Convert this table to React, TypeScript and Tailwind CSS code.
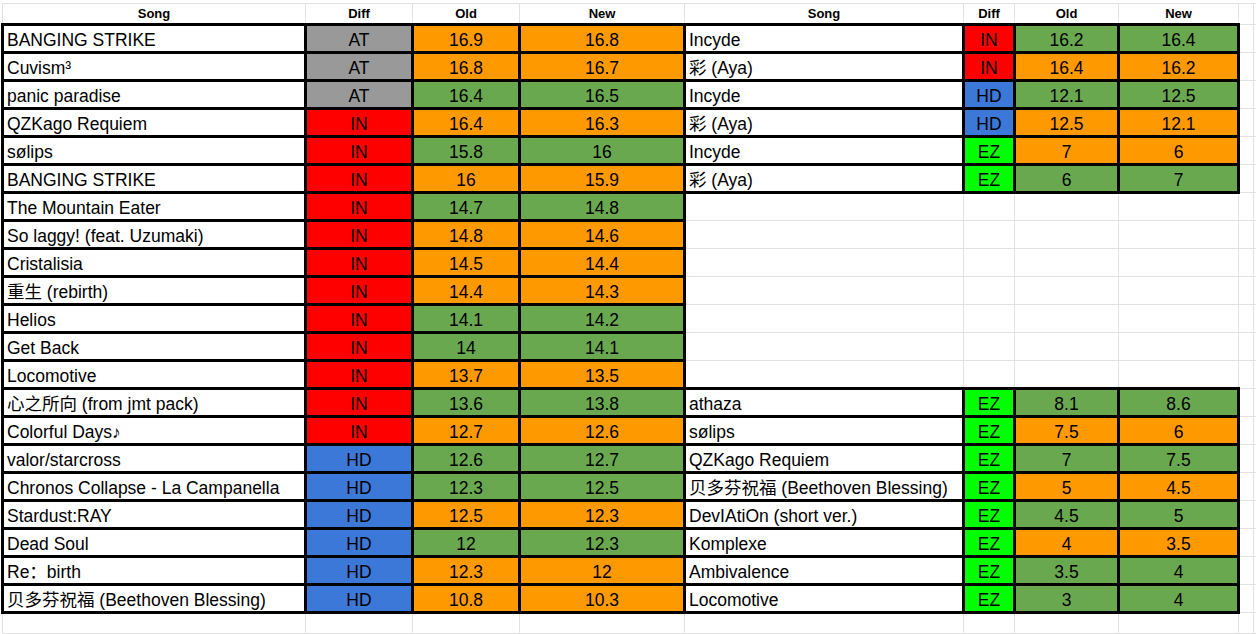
import React from 'react';

type Tier = 'AT' | 'IN' | 'HD' | 'EZ';
type Row = [string, Tier, string, string, 'o' | 'g'];

const tierBg: Record<Tier, string> = {
  AT: 'bg-[#999999]',
  IN: 'bg-[#ff0000]',
  HD: 'bg-[#3c78d8]',
  EZ: 'bg-[#00ff00]',
};

const left: Row[] = [
  ['BANGING STRIKE', 'AT', '16.9', '16.8', 'o'],
  ['Cuvism³', 'AT', '16.8', '16.7', 'o'],
  ['panic paradise', 'AT', '16.4', '16.5', 'g'],
  ['QZKago Requiem', 'IN', '16.4', '16.3', 'o'],
  ['sølips', 'IN', '15.8', '16', 'g'],
  ['BANGING STRIKE', 'IN', '16', '15.9', 'o'],
  ['The Mountain Eater', 'IN', '14.7', '14.8', 'g'],
  ['So laggy! (feat. Uzumaki)', 'IN', '14.8', '14.6', 'o'],
  ['Cristalisia', 'IN', '14.5', '14.4', 'o'],
  ['重生 (rebirth)', 'IN', '14.4', '14.3', 'o'],
  ['Helios', 'IN', '14.1', '14.2', 'g'],
  ['Get Back', 'IN', '14', '14.1', 'g'],
  ['Locomotive', 'IN', '13.7', '13.5', 'o'],
  ['心之所向 (from jmt pack)', 'IN', '13.6', '13.8', 'g'],
  ['Colorful Days♪', 'IN', '12.7', '12.6', 'o'],
  ['valor/starcross', 'HD', '12.6', '12.7', 'g'],
  ['Chronos Collapse - La Campanella', 'HD', '12.3', '12.5', 'g'],
  ['Stardust:RAY', 'HD', '12.5', '12.3', 'o'],
  ['Dead Soul', 'HD', '12', '12.3', 'g'],
  ['Re：birth', 'HD', '12.3', '12', 'o'],
  ['贝多芬祝福 (Beethoven Blessing)', 'HD', '10.8', '10.3', 'o'],
];

// null = empty row on the right side
const right: (Row | null)[] = [
  ['Incyde', 'IN', '16.2', '16.4', 'g'],
  ['彩 (Aya)', 'IN', '16.4', '16.2', 'o'],
  ['Incyde', 'HD', '12.1', '12.5', 'g'],
  ['彩 (Aya)', 'HD', '12.5', '12.1', 'o'],
  ['Incyde', 'EZ', '7', '6', 'o'],
  ['彩 (Aya)', 'EZ', '6', '7', 'g'],
  null, null, null, null, null, null, null,
  ['athaza', 'EZ', '8.1', '8.6', 'g'],
  ['sølips', 'EZ', '7.5', '6', 'o'],
  ['QZKago Requiem', 'EZ', '7', '7.5', 'g'],
  ['贝多芬祝福 (Beethoven Blessing)', 'EZ', '5', '4.5', 'o'],
  ['DevIAtiOn (short ver.)', 'EZ', '4.5', '5', 'g'],
  ['Komplexe', 'EZ', '4', '3.5', 'o'],
  ['Ambivalence', 'EZ', '3.5', '4', 'g'],
  ['Locomotive', 'EZ', '3', '4', 'g'],
];

const grid = 'border border-[#e2e2e2]';
const thick = 'border-[3px] border-black pt-[4px]';

function Cells({ row }: { row: Row | null }) {
  if (!row) {
    return (
      <>
        <td className={grid} />
        <td className={grid} />
        <td className={grid} />
        <td className={grid} />
      </>
    );
  }
  const [song, tier, oldV, newV, c] = row;
  const numBg = c === 'o' ? 'bg-[#ff9900]' : 'bg-[#6aa84f]';
  return (
    <>
      <td className={`${thick} bg-white pl-[3px] text-left whitespace-nowrap overflow-hidden`}>{song}</td>
      <td className={`${thick} ${tierBg[tier]} text-center`}>{tier}</td>
      <td className={`${thick} ${numBg} text-center`}>{oldV}</td>
      <td className={`${thick} ${numBg} text-center`}>{newV}</td>
    </>
  );
}

export default function App() {
  const heads = ['Song', 'Diff', 'Old', 'New', 'Song', 'Diff', 'Old', 'New', '', ''];
  return (
    <div className="w-[1256px] h-[634px] overflow-hidden bg-white text-black font-['Liberation_Sans','Noto_Sans_CJK_SC',sans-serif]">
      <table className="mt-[3px] ml-[1px] border-collapse table-fixed w-[1292px] text-[17.5px] leading-none">
        <colgroup>
          <col className="w-[303px]" />
          <col className="w-[107px]" />
          <col className="w-[107px]" />
          <col className="w-[165px]" />
          <col className="w-[279px]" />
          <col className="w-[51px]" />
          <col className="w-[104px]" />
          <col className="w-[120px]" />
          <col className="w-[15px]" />
          <col className="w-[41px]" />
        </colgroup>
        <tbody>
          <tr className="h-[21px]">
            {heads.map((h, i) => (
              <td key={i} className={`${grid} text-center text-[13px] font-bold align-middle`}>
                {h}
              </td>
            ))}
          </tr>
          {left.map((row, i) => (
            <tr key={i} className="h-[28px]">
              <Cells row={row} />
              <Cells row={right[i]} />
              <td className={grid} />
              <td className={grid} />
            </tr>
          ))}
          <tr className="h-[21px]">
            {heads.map((_, i) => (
              <td key={i} className={grid} />
            ))}
          </tr>
        </tbody>
      </table>
    </div>
  );
}
